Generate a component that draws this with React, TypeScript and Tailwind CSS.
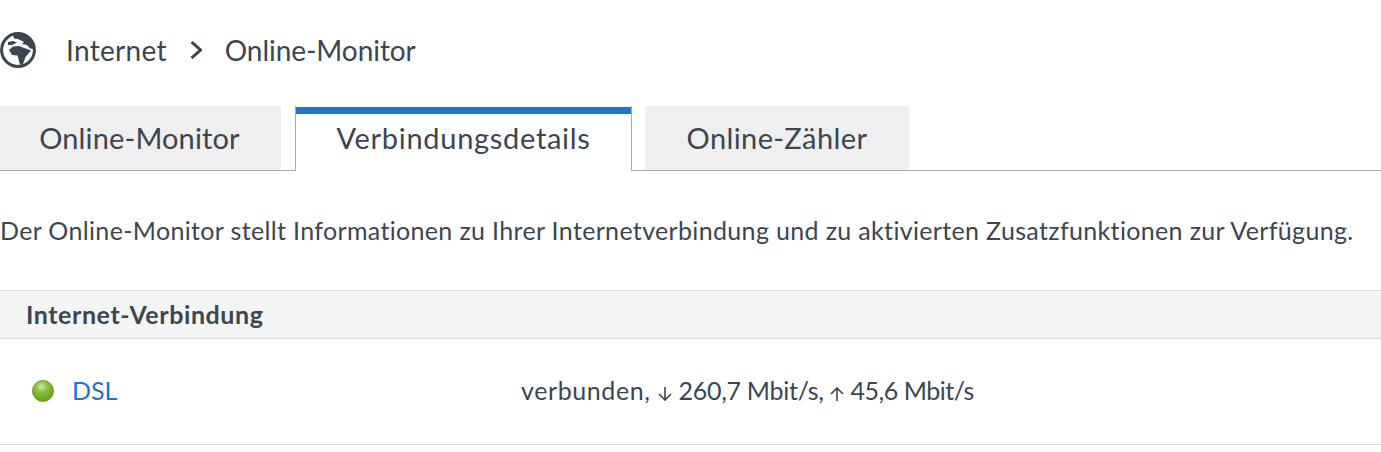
import React from "react";

function GlobeIcon() {
  return (
    <svg viewBox="0 0 36 36" className="w-[36px] h-[36px] shrink-0">
      <circle cx="18" cy="18" r="16.4" fill="#fff" stroke="#3c4650" strokeWidth="3" />
      <path d="M13 3 L24 2.5 L31 8 L34 17 L30 16.5 L27 13 L22 12 L24 10 L18 7 L14 6.5 Z" fill="#3c4650" />
      <path d="M8 10 L13 9 L17 10.5 L12 13 L8 13 Z" fill="#3c4650" />
      <path d="M9 18 L13 14.5 L19 14 L23 15.5 L27 17 L31 18.5 L28 22 L25.5 25 L23 32 L20 33 L18.5 27 L17.5 23.5 L12 23 Z" fill="#3c4650" />
    </svg>
  );
}

function DownArrow() {
  return (
    <svg viewBox="0 0 14 14" className="inline-block w-[14px] h-[14px] align-[-1px] mx-[7px]">
      <path d="M7 0 V13 M1 7 L7 13 L13 7" fill="none" stroke="#3c4650" strokeWidth="1.6" />
    </svg>
  );
}

function UpArrow() {
  return (
    <svg viewBox="0 0 14 14" className="inline-block w-[14px] h-[14px] align-[-1px] ml-[6px] mr-[7px]">
      <path d="M7 14 V1 M1 7 L7 1 L13 7" fill="none" stroke="#3c4650" strokeWidth="1.6" />
    </svg>
  );
}

function Tab({ label, className }: { label: string; className: string }) {
  return <div className={`h-[64px] bg-[#efefef] flex items-center justify-center ${className}`}>{label}</div>;
}

export default function App() {
  return (
    <div className="w-[1381px] h-[452px] bg-white overflow-hidden text-[#3c4650] font-['Lato','Noto_Sans',sans-serif] [font-variant-ligatures:none]">
      <div className="h-[106px] pt-[32px] flex items-start">
        <GlobeIcon />
        <div className="flex items-center h-[36px] ml-[30px] text-[28px]">
          <span className="tracking-[0.3px]">Internet</span>
          <svg viewBox="0 0 12 18" className="w-[12px] h-[18px] mx-[23px]">
            <path d="M1.5 1 L10.5 9 L1.5 17" fill="none" stroke="#3c4650" strokeWidth="3" />
          </svg>
          <span className="tracking-[-0.05px]">Online-Monitor</span>
        </div>
      </div>

      <div className="flex items-end h-[65px] border-b border-[#aaaaaa] text-[29px]">
        <Tab label="Online-Monitor" className="w-[281px] pr-[2px] tracking-[0.15px]" />
        <div className="ml-[14px] w-[337px] h-[65px] -mb-px bg-white border-l border-r border-[#aaaaaa] flex flex-col z-10">
          <div className="h-[7px] mt-px bg-[#1976d2]" />
          <div className="flex-1 flex items-center justify-center pb-[9px] tracking-[0.7px]">Verbindungsdetails</div>
        </div>
        <Tab label="Online-Zähler" className="ml-[13px] w-[264px] tracking-[0.4px]" />
      </div>

      <p className="mt-[45px] h-[30px] leading-[29px] text-[25px] tracking-[0.34px] whitespace-nowrap">
        Der Online-Monitor stellt Informationen zu Ihrer Internetverbindung und zu aktivierten Zusatzfunktionen zur Verfügung.
      </p>

      <div className="mt-[44px] h-[49px] border-t border-b border-[#dddddd] bg-[#f3f5f5] pl-[26px] flex items-center text-[25px] font-bold tracking-[0.58px]">
        Internet-Verbindung
      </div>

      <div className="h-[106px] pb-[2px] border-b border-[#dddddd] flex items-center text-[25px]">
        <div className="w-[521px] pl-[32px] flex items-center">
          <span className="w-[22px] h-[22px] rounded-full border border-[#6b9e1f] bg-[radial-gradient(circle_at_42%_28%,#d4e8ad_0%,#8fbf3f_30%,#6ea51f_70%,#83b63a_100%)]" />
          <span className="ml-[18px] text-[#1976d2]">DSL</span>
        </div>
        <span className="whitespace-nowrap">
          <span className="tracking-[0.6px]">verbunden,</span>
          <DownArrow />
          <span className="tracking-[-0.3px]">260,7 Mbit/s,</span>
          <UpArrow />
          <span className="tracking-[-0.5px]">45,6 Mbit/s</span>
        </span>
      </div>
    </div>
  );
}
